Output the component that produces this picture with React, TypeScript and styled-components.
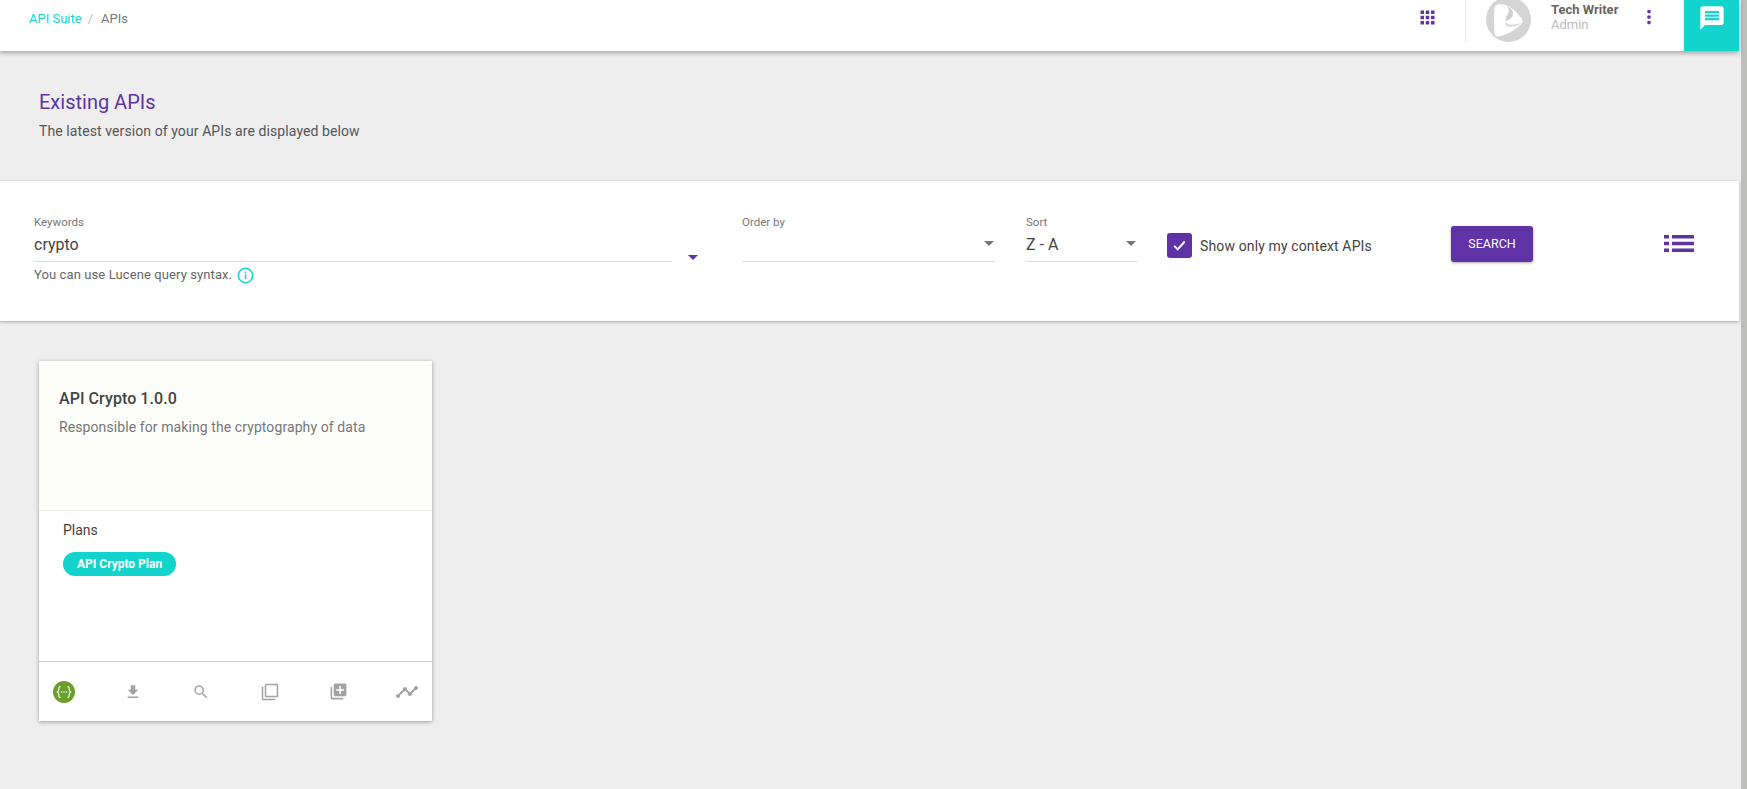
import React from "react";
import styled, { createGlobalStyle } from "styled-components";
import { MdApps, MdMoreVert, MdMessage, MdFileDownload, MdSearch, MdFilterNone, MdLibraryAdd, MdTimeline } from "react-icons/md";

const PURPLE = "#5f33a6";
const TEAL = "#12d4cd";

const GlobalStyle = createGlobalStyle`
  html, body {
    margin: 0;
    padding: 0;
    height: 100%;
    overflow: hidden;
    background: #eeeeee;
    font-family: "Roboto", "Liberation Sans", sans-serif;
  }
`;

function App() {
  return (
    <>
      <GlobalStyle />
      <Page>
        <Main>
          <Header>
            <Breadcrumb>
              <CrumbLink>API Suite</CrumbLink>
              <CrumbSep>/</CrumbSep>
              <CrumbCurrent>APIs</CrumbCurrent>
            </Breadcrumb>
            <HeaderRight>
              <AppsButton>
                <MdApps size={21} />
              </AppsButton>
              <Divider />
              <Avatar>
                <svg width="45" height="45" viewBox="0 0 45 45">
                  <circle cx="22.5" cy="22.5" r="22.5" fill="#d4d4d4" />
                  <path d="M12 7.500c8-2 17 5 23 13 2 3 2 5 0 7-7 6-15 11-23 12-2.500.3-3.500-1-3.500-3-.5-9-.5-18 0-26 0-1.500 1.500-2.600 3.500-3z" fill="#fff" />
                  <path d="M20 9c6 2 9 7 6 11-2 3-5 3-6 5-1-3 0-5 2-8 1.500-3 1-6-2-8z" fill="#d0d0d0" />
                  <path d="M20 25c1 3 9 3 16 1-6 4-13 5-16 3-1.500-1-1-3 0-4z" fill="#dedede" />
                </svg>
              </Avatar>
              <UserInfo>
                <UserName>Tech Writer</UserName>
                <UserRole>Admin</UserRole>
              </UserInfo>
              <MoreButton>
                <MdMoreVert size={22} />
              </MoreButton>
              <ChatTab>
                <MdMessage size={28} />
              </ChatTab>
            </HeaderRight>
          </Header>

          <Intro>
            <Title>Existing APIs</Title>
            <Subtitle>The latest version of your APIs are displayed below</Subtitle>
          </Intro>

          <SearchPanel>
            <KeywordField>
              <FieldLabel>Keywords</FieldLabel>
              <FieldValue>crypto</FieldValue>
              <Hint>
                You can use Lucene query syntax.
                <InfoIcon viewBox="0 0 18 18">
                  <circle cx="9" cy="9" r="7.6" fill="none" stroke={TEAL} strokeWidth="1.6" />
                  <rect x="8.2" y="7.6" width="1.6" height="5.4" fill={TEAL} />
                  <rect x="8.2" y="4.8" width="1.6" height="1.7" fill={TEAL} />
                </InfoIcon>
              </Hint>
            </KeywordField>
            <KeywordCaret />
            <SelectField $width={253} $gap={44}>
              <FieldLabel>Order by</FieldLabel>
              <FieldValue>
                &nbsp;
                <Caret />
              </FieldValue>
            </SelectField>
            <SelectField $width={111} $gap={31}>
              <FieldLabel>Sort</FieldLabel>
              <FieldValue>
                Z - A
                <Caret />
              </FieldValue>
            </SelectField>
            <CheckRow>
              <CheckBox>
                <svg width="13" height="11" viewBox="0 0 13 11">
                  <path d="M1.200 5.800l3.500 3.500 7-7.800" fill="none" stroke="#fff" strokeWidth="1.900" />
                </svg>
              </CheckBox>
              <CheckLabel>Show only my context APIs</CheckLabel>
            </CheckRow>
            <SearchButton>SEARCH</SearchButton>
            <ListToggle viewBox="0 0 30 17">
              <rect x="0" y="0" width="5" height="3.5" />
              <rect x="8" y="0" width="22" height="3.5" />
              <rect x="0" y="6.750" width="5" height="3.5" />
              <rect x="8" y="6.750" width="22" height="3.5" />
              <rect x="0" y="13.500" width="5" height="3.5" />
              <rect x="8" y="13.500" width="22" height="3.5" />
            </ListToggle>
          </SearchPanel>

          <CardGrid>
            <Card>
              <CardTop>
                <CardTitle>API Crypto 1.0.0</CardTitle>
                <CardDesc>Responsible for making the cryptography of data</CardDesc>
              </CardTop>
              <CardPlans>
                <PlansLabel>Plans</PlansLabel>
                <PlanChip>API Crypto Plan</PlanChip>
              </CardPlans>
              <CardActions>
                <ActionIcon>
                  <svg width="22" height="22" viewBox="0 0 22 22">
                    <circle cx="11" cy="11" r="11" fill="#6a9f2c" />
                    <path
                      d="M7.600 5.500c-1.800 0-1.700 1.200-1.700 2.600 0 1.600-.4 2.400-1.500 2.900 1.100.5 1.500 1.300 1.500 2.900 0 1.400-.1 2.600 1.700 2.600M14.400 5.500c1.800 0 1.700 1.200 1.700 2.600 0 1.600.4 2.400 1.500 2.900-1.100.5-1.500 1.300-1.500 2.900 0 1.400.1 2.600-1.700 2.600"
                      fill="none"
                      stroke="#fff"
                      strokeWidth="1.100"
                    />
                    <circle cx="8.600" cy="11" r=".8" fill="#fff" />
                    <circle cx="11" cy="11" r=".8" fill="#fff" />
                    <circle cx="13.400" cy="11" r=".8" fill="#fff" />
                  </svg>
                </ActionIcon>
                <ActionIcon><MdFileDownload size={18} /></ActionIcon>
                <ActionIcon><MdSearch size={18} /></ActionIcon>
                <ActionIcon><MdFilterNone size={18} /></ActionIcon>
                <ActionIcon><MdLibraryAdd size={19} /></ActionIcon>
                <ActionIcon><MdTimeline size={24} /></ActionIcon>
              </CardActions>
            </Card>
          </CardGrid>
        </Main>
        <ScrollTrack />
      </Page>
    </>
  );
}

const Page = styled.div`
  display: flex;
  height: 100vh;
  overflow: hidden;
`;

const Main = styled.div`
  flex: 1;
  min-width: 0;
`;

const ScrollTrack = styled.div`
  width: 6px;
  margin-left: 2px;
  background: #bdbdbb;
`;

const Header = styled.header`
  height: 51px;
  background: #fff;
  display: flex;
  justify-content: space-between;
  box-shadow: 0 2px 5px rgba(0, 0, 0, 0.32);
  position: relative;
`;

const Breadcrumb = styled.div`
  display: flex;
  padding: 11px 0 0 29px;
  font-size: 13px;
  line-height: 15px;
`;

const CrumbLink = styled.span`
  color: ${TEAL};
`;

const CrumbSep = styled.span`
  color: #bbb;
  margin: 0 8px 0 6px;
`;

const CrumbCurrent = styled.span`
  color: #777;
`;

const HeaderRight = styled.div`
  display: flex;
  align-items: flex-start;
`;

const AppsButton = styled.div`
  color: ${PURPLE};
  display: flex;
  padding: 7px 0 0;
  width: 22px;
`;

const Divider = styled.div`
  width: 1px;
  height: 42px;
  background: #e6e6e6;
  margin-left: 26px;
`;

const Avatar = styled.div`
  margin: -3px 0 0 20px;
  width: 45px;
  height: 45px;
  display: flex;
`;

const UserInfo = styled.div`
  margin-left: 20px;
  width: 87px;
  padding-top: 2px;
`;

const UserName = styled.div`
  font-size: 13px;
  line-height: 15px;
  font-weight: 700;
  color: #666;
`;

const UserRole = styled.div`
  font-size: 13px;
  line-height: 15px;
  color: #bbb;
`;

const MoreButton = styled.div`
  color: ${PURPLE};
  display: flex;
  padding-top: 6px;
  width: 22px;
`;

const ChatTab = styled.div`
  width: 55px;
  height: 51px;
  margin-left: 24px;
  background: ${TEAL};
  color: #fff;
  display: flex;
  justify-content: center;
  padding-top: 4px;
  box-sizing: border-box;
`;

const Intro = styled.section`
  padding: 39px 39px 0;
  height: 130px;
  box-sizing: border-box;
`;

const Title = styled.h1`
  margin: 0;
  font-size: 20px;
  line-height: 24px;
  font-weight: 400;
  color: ${PURPLE};
`;

const Subtitle = styled.p`
  margin: 7px 0 0;
  font-size: 14px;
  line-height: 20px;
  letter-spacing: 0.09px;
  color: #555;
`;

const SearchPanel = styled.section`
  height: 140px;
  background: #fff;
  box-shadow: 0 1px 3px rgba(0, 0, 0, 0.3);
  display: flex;
  align-items: flex-start;
  padding: 34px 0 0 34px;
  box-sizing: border-box;
  position: relative;
`;

const KeywordField = styled.div`
  width: 638px;
`;

const KeywordCaret = styled.div`
  width: 0;
  height: 0;
  margin: 40px 0 0 16px;
  border-left: 5px solid transparent;
  border-right: 5px solid transparent;
  border-top: 5px solid ${PURPLE};
`;

const FieldLabel = styled.div`
  font-size: 11.5px;
  line-height: 14px;
  color: #777;
`;

const FieldValue = styled.div`
  font-size: 16px;
  line-height: 20px;
  color: #444;
  padding: 6px 0;
  position: relative;
  border-bottom: 1px solid #dcdcdc;
`;

const Caret = styled.span`
  position: absolute;
  right: 1px;
  top: 12px;
  width: 0;
  height: 0;
  border-left: 5px solid transparent;
  border-right: 5px solid transparent;
  border-top: 5px solid #777;
`;

const Hint = styled.div`
  display: flex;
  align-items: center;
  gap: 5px;
  margin-top: 4px;
  font-size: 13px;
  line-height: 18px;
  letter-spacing: 0.1px;
  color: #666;
`;

const InfoIcon = styled.svg`
  width: 17px;
  height: 17px;
`;

const SelectField = styled.div<{ $width: number; $gap: number }>`
  width: ${(p) => p.$width}px;
  margin-left: ${(p) => p.$gap}px;
`;

const CheckRow = styled.div`
  display: flex;
  align-items: center;
  margin: 18px 0 0 30px;
  width: 284px;
`;

const CheckBox = styled.div`
  width: 25px;
  height: 25px;
  border-radius: 3px;
  background: ${PURPLE};
  color: #fff;
  display: flex;
  align-items: center;
  justify-content: center;
`;

const CheckLabel = styled.span`
  margin-left: 8px;
  font-size: 14px;
  letter-spacing: 0.13px;
  color: #444;
`;

const SearchButton = styled.div`
  width: 82px;
  height: 36px;
  margin-top: 11px;
  padding-bottom: 1px;
  box-sizing: border-box;
  background: ${PURPLE};
  border-radius: 3px;
  color: #fff;
  font-size: 12.5px;
  display: flex;
  align-items: center;
  justify-content: center;
  box-shadow: 0 1px 3px rgba(0, 0, 0, 0.35);
`;

const ListToggle = styled.svg`
  width: 30px;
  height: 17px;
  margin: 20px 0 0 131px;
  fill: ${PURPLE};
`;

const CardGrid = styled.section`
  padding: 40px 39px 0;
`;

const Card = styled.article`
  width: 393px;
  height: 360px;
  background: #fff;
  box-shadow: 0 1px 4px rgba(0, 0, 0, 0.35);
  display: flex;
  flex-direction: column;
`;

const CardTop = styled.div`
  height: 150px;
  background: #fdfdfa;
  border-bottom: 1px solid #ececec;
  box-sizing: border-box;
  padding: 28px 20px 0;
`;

const CardTitle = styled.h2`
  margin: 0;
  font-size: 16px;
  line-height: 20px;
  font-weight: 500;
  letter-spacing: 0.07px;
  color: #444;
`;

const CardDesc = styled.p`
  margin: 8px 0 0;
  font-size: 14px;
  line-height: 20px;
  letter-spacing: 0.09px;
  color: #777;
`;

const CardPlans = styled.div`
  flex: 1;
  padding: 10px 24px 0;
  border-bottom: 1px solid #cfcfcf;
`;

const PlansLabel = styled.div`
  font-size: 14px;
  line-height: 18px;
  color: #444;
`;

const PlanChip = styled.span`
  display: inline-block;
  margin-top: 13px;
  padding: 0 14px;
  height: 24px;
  line-height: 24px;
  border-radius: 12px;
  background: ${TEAL};
  color: #fff;
  font-size: 12px;
  font-weight: 700;
`;

const CardActions = styled.div`
  height: 59px;
  padding: 0 13px;
  display: flex;
  align-items: center;
  justify-content: space-between;
  color: #a3a3a3;
`;

const ActionIcon = styled.span`
  display: flex;
  align-items: center;
  justify-content: center;
  width: 24px;
`;

export default App;
